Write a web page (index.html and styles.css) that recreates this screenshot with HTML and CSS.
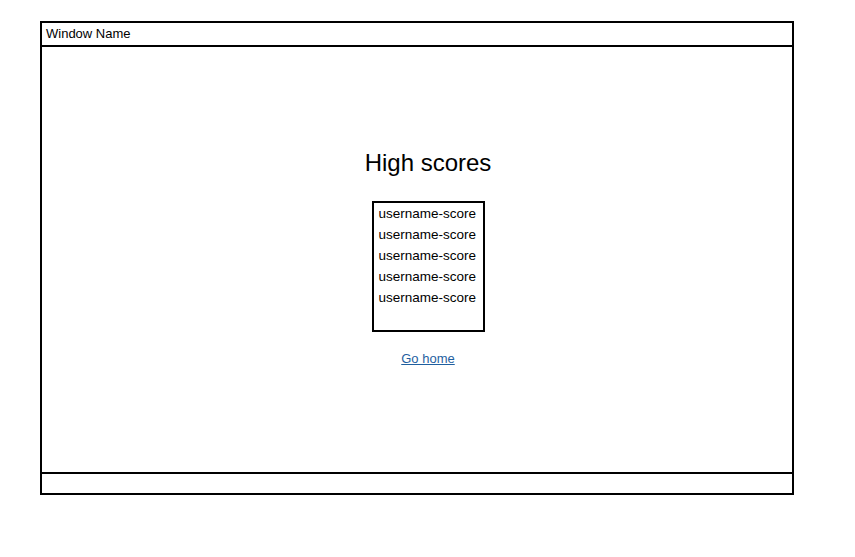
FILE: index.html
```html
<!DOCTYPE html>
<html>
<head>
<meta charset="utf-8">
<link rel="stylesheet" href="styles.css">
</head>
<body>
<div class="window">
  <div class="titlebar">Window Name</div>
  <div class="content">
    <h1 class="heading">High scores</h1>
    <div class="scores">
      <div class="row">username-score</div>
      <div class="row">username-score</div>
      <div class="row">username-score</div>
      <div class="row">username-score</div>
      <div class="row">username-score</div>
    </div>
    <a class="home" href="#">Go home</a>
  </div>
  <div class="footer"></div>
</div>
</body>
</html>
```
FILE: styles.css
```css
html, body {
  margin: 0;
  padding: 0;
  background: #fff;
}
body {
  font-family: "Liberation Sans", Arial, sans-serif;
  color: #000;
  padding: 21px 0 0 40px;
}
.window {
  width: 750px;
  height: 470px;
  border: 2px solid #000;
  display: flex;
  flex-direction: column;
}
.titlebar {
  height: 22px;
  border-bottom: 2px solid #000;
  font-size: 13px;
  line-height: 22px;
  padding-left: 4px;
}
.content {
  flex: 1;
  display: flex;
  flex-direction: column;
  align-items: center;
  padding: 102px 0 0 22px;
}
.heading {
  margin: 0;
  font-size: 24px;
  font-weight: normal;
  line-height: 28px;
}
.scores {
  margin-top: 24px;
  width: 99px;
  height: 127px;
  border: 2px solid #000;
  padding: 0 5px 0 5px;
  font-size: 13.5px;
  line-height: 21px;
}
.home {
  margin-top: 19px;
  font-size: 13px;
  line-height: 16px;
  color: #1f5f9f;
  text-decoration: underline;
}
.footer {
  height: 19px;
  border-top: 2px solid #000;
}
```
